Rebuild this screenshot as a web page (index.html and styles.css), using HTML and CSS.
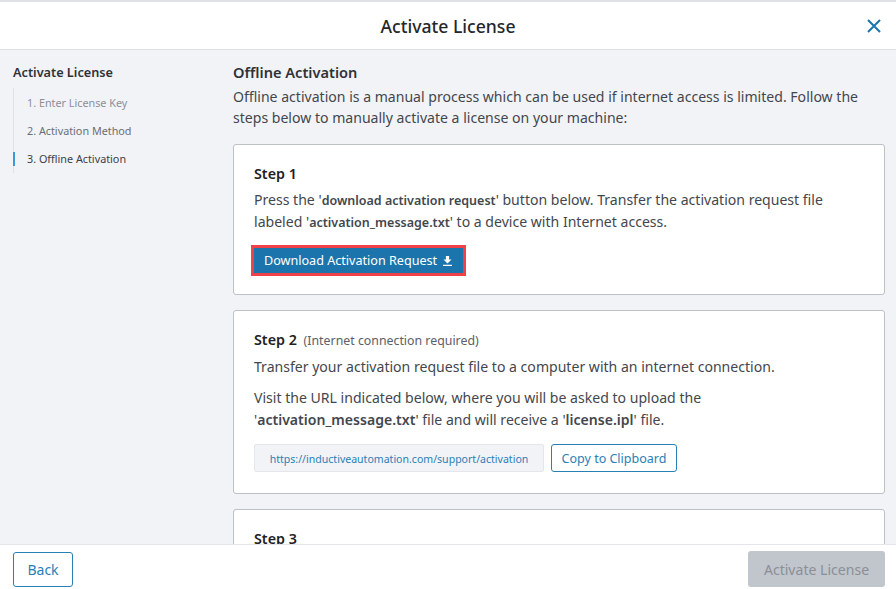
FILE: index.html
```html
<!DOCTYPE html>
<html lang="en">
<head>
<meta charset="utf-8">
<title>Activate License</title>
<link rel="stylesheet" href="styles.css">
</head>
<body>
<div class="modal">
  <header class="header">
    <h1 class="header-title">Activate License</h1>
    <button class="close" aria-label="Close">
      <svg class="close-icon" viewBox="0 0 14 14"><path d="M1 1L13 13M13 1L1 13"/></svg>
    </button>
  </header>
  <div class="body">
    <nav class="side">
      <div class="side-title">Activate License</div>
      <ol class="steps">
        <li class="step step-done">1. Enter License Key</li>
        <li class="step">2. Activation Method</li>
        <li class="step step-active">3. Offline Activation</li>
      </ol>
    </nav>
    <main class="content">
      <h2 class="content-title">Offline Activation</h2>
      <p class="intro">Offline activation is a manual process which can be used if internet access is limited. Follow the steps below to manually activate a license on your machine:</p>
      <section class="card card-1">
        <h3 class="card-title">Step 1</h3>
        <p class="text">Press the '<b class="small-b">download activation request</b>' button below. Transfer the activation request file labeled '<b class="small-b">activation_message.txt</b>' to a device with Internet access.</p>
        <button class="primary">Download Activation Request
          <svg class="dl-icon" viewBox="0 0 9 10"><path d="M2.9 0h3.2v3.4h2.4L4.5 7.4.5 3.4h2.4zM0 8.8h9V10H0z"/></svg>
        </button>
      </section>
      <section class="card card-2">
        <h3 class="card-title">Step 2 <span class="note">(Internet connection required)</span></h3>
        <p class="text">Transfer your activation request file to a computer with an internet connection.</p>
        <p class="text text-gap">Visit the URL indicated below, where you will be asked to upload the '<b>activation_message.txt</b>' file and will receive a '<b>license.ipl</b>' file.</p>
        <div class="url-row">
          <div class="url">https://inductiveautomation.com/support/activation</div>
          <button class="outline copy">Copy to Clipboard</button>
        </div>
      </section>
      <section class="card card-3">
        <h3 class="card-title">Step 3</h3>
      </section>
    </main>
  </div>
  <footer class="footer">
    <button class="outline back">Back</button>
    <button class="disabled">Activate License</button>
  </footer>
</div>
</body>
</html>
```
FILE: styles.css
```css
* { box-sizing: border-box; }
html, body { margin: 0; padding: 0; }
body {
  font-family: "Noto Sans", sans-serif;
  color: #2f3237;
  background: #fff;
}
button { font-family: inherit; cursor: pointer; }
.modal {
  width: 896px;
  height: 589px;
  display: flex;
  flex-direction: column;
  overflow: hidden;
  border-top: 2px solid #dfe1e6;
}
.header {
  height: 48px;
  flex: none;
  display: flex;
  align-items: center;
  justify-content: center;
  border-bottom: 1px solid #dfe1e6;
  position: relative;
}
.header-title {
  margin: 0;
  font-size: 17.6px;
  font-weight: 500;
  line-height: 24px;
  color: #24262a;
}
.close {
  position: absolute;
  right: 14px;
  top: 16px;
  width: 16px;
  height: 16px;
  padding: 1px;
  border: 0;
  background: none;
  display: flex;
}
.close-icon { width: 14px; height: 14px; stroke: #1b75ac; stroke-width: 2; fill: none; }
.body {
  flex: 1;
  min-height: 0;
  display: flex;
  background: #f2f3f7;
  overflow: hidden;
}
.side { width: 233px; flex: none; padding: 12px 0 0 13px; }
.side-title { font-size: 12.7px; font-weight: 600; line-height: 20px; color: #2f3237; }
.steps {
  list-style: none;
  margin: 6px 0 0;
  padding: 0 0 1px;
  border-left: 1px solid #dfe1e6;
  font-size: 10.8px;
  color: #6a6e76;
}
.step {
  height: 28px;
  line-height: 30px;
  padding-left: 13px;
}
.step-done { color: #8b8f97; }
.step-active { color: #3c4046; position: relative; }
.step-active::before {
  content: "";
  position: absolute;
  left: -1px;
  top: 8px;
  width: 2px;
  height: 14px;
  background: #3b9ad6;
}
.content { flex: 1; min-width: 0; padding: 12px 11px 0 0; }
.content-title { margin: 0; font-size: 14.6px; font-weight: 600; line-height: 20px; color: #2f3237; }
.intro { margin: 4px 0 0; font-size: 14.07px; line-height: 21px; color: #43474d; }
.card {
  background: #fff;
  border: 1px solid #bcc0c7;
  border-radius: 3px;
  padding: 19px 20px;
  margin-top: 15px;
}
.intro + .card { margin-top: 16px; }
.card-1 { height: 151px; }
.card-2 { height: 184px; }
.card-3 { height: 60px; }
.card-title { margin: 0; font-size: 14.3px; font-weight: 600; line-height: 20px; color: #1f2125; }
.note { font-size: 12.35px; font-weight: 400; color: #5c6068; margin-left: 3px; }
.text { margin: 5px 0 0; font-size: 14.07px; line-height: 22px; color: #43474d; }
.card-2 .text-gap { margin-top: 9px; }
.small-b { font-size: 12.5px; line-height: 1; }
b { font-weight: 600; line-height: 1; }
.primary {
  margin-top: 15px;
  display: flex;
  align-items: center;
  gap: 6px;
  width: 209px;
  height: 25px;
  padding: 0 0 0 10px;
  border: 0;
  border-radius: 0;
  background: #1b75ac;
  color: #fff;
  font-size: 12.6px;
  outline: 3px solid #f0404a;
  outline-offset: 0;
  white-space: nowrap;
}
.dl-icon { width: 9px; height: 10px; fill: #fff; flex: none; }
.url-row { display: flex; gap: 7px; margin-top: 13px; align-items: flex-start; }
.url {
  width: 290px;
  height: 28px;
  background: #f2f3f7;
  border: 1px solid #e4e6eb;
  border-radius: 2px;
  color: #2a80b5;
  font-size: 10.55px;
  line-height: 28px;
  text-align: center;
}
.outline {
  background: #fff;
  border: 1px solid #2a80b5;
  border-radius: 3px;
  color: #2a80b5;
}
.copy { width: 126px; height: 28px; font-size: 12.5px; padding: 0; }
.footer {
  height: 45px;
  flex: none;
  display: flex;
  justify-content: space-between;
  align-items: flex-end;
  padding: 0 11px 2px 13px;
  border-top: 1px solid #e4e6eb;
  background: #fff;
}
.back { width: 60px; height: 35px; font-size: 14px; padding: 0; }
.disabled {
  width: 137px;
  height: 36px;
  border: 0;
  border-radius: 3px;
  background: #c1c5cc;
  color: #8b8f97;
  font-size: 14.07px;
  padding: 0;
}
```
